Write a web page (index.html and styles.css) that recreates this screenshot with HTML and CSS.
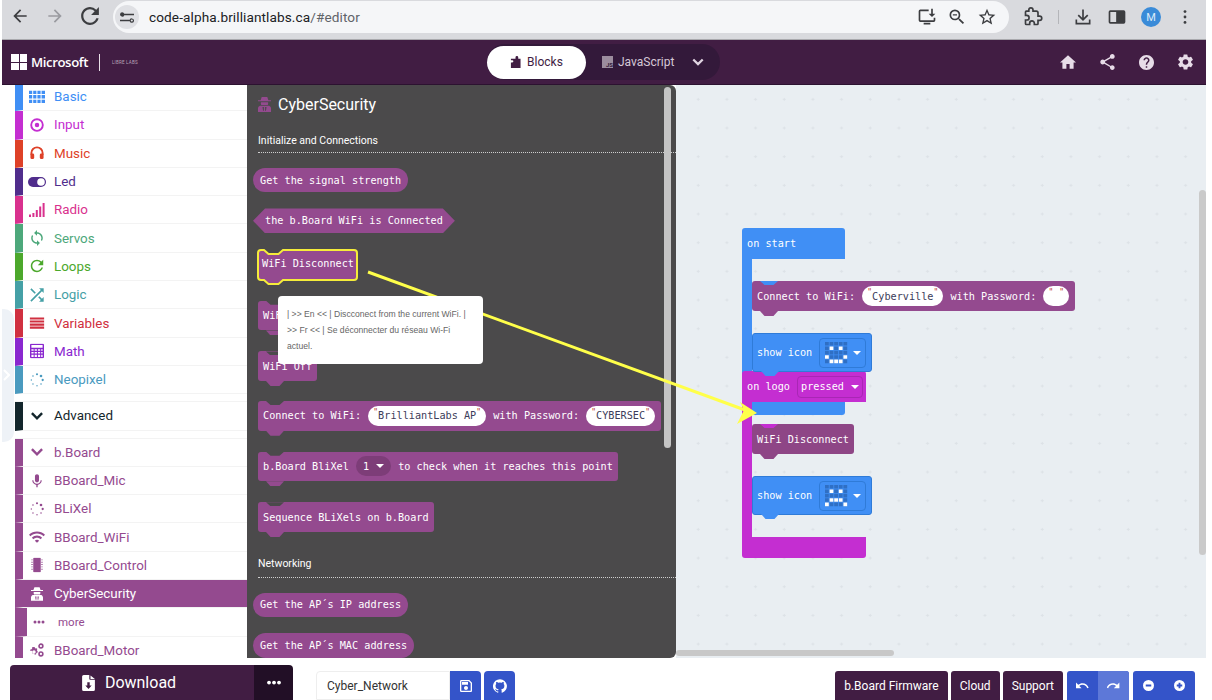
FILE: index.html
```html
<!DOCTYPE html>
<html lang="en">
<head>
    <meta charset="UTF-8">
    <title>Microsoft MakeCode - Brilliant Labs</title>
    <link rel="stylesheet" href="styles.css">
</head>
<body>
<svg class="defs" width="0" height="0">
    <symbol id="i-grid" viewBox="0 0 16 13"><path d="M0 0h3.2v3.4H0zM4.2 0h3.2v3.4H4.2zM8.4 0h3.2v3.4H8.4zM12.6 0H16v3.4h-3.4zM0 4.6h3.2V8H0zM4.2 4.6h3.2V8H4.2zM8.4 4.6h3.2V8H8.4zM12.6 4.6H16V8h-3.4zM0 9.2h3.2v3.4H0zM4.2 9.2h3.2v3.4H4.2zM8.4 9.2h3.2v3.4H8.4zM12.6 9.2H16v3.4h-3.4z"/></symbol>
    <symbol id="i-input" viewBox="0 0 16 16"><circle cx="8" cy="8" r="6.2" fill="none" stroke="currentColor" stroke-width="2"/><circle cx="8" cy="8" r="2.4"/></symbol>
    <symbol id="i-music" viewBox="0 0 16 16"><path d="M2 10V8a6 6 0 0 1 12 0v2" fill="none" stroke="currentColor" stroke-width="2"/><rect x="1" y="8.5" width="4" height="6" rx="1.5"/><rect x="11" y="8.5" width="4" height="6" rx="1.5"/></symbol>
    <symbol id="i-led" viewBox="0 0 18 10"><rect width="18" height="10" rx="5"/><circle cx="13" cy="5" r="3.8" fill="#fff"/></symbol>
    <symbol id="i-radio" viewBox="0 0 16 14"><path d="M0 11.5h2V14H0zM3.4 10h2v4h-2zM6.8 7h2v7h-2zM10.2 3.5h2V14h-2zM13.6 0h2v14h-2z"/></symbol>
    <symbol id="i-sync" viewBox="3 1 18 22"><path d="M12 4V1L8 5l4 4V6c3.31 0 6 2.69 6 6 0 1.01-.25 1.97-.7 2.8l1.46 1.46A7.93 7.93 0 0 0 20 12c0-4.42-3.58-8-8-8zm0 14c-3.31 0-6-2.69-6-6 0-1.01.25-1.97.7-2.8L5.24 7.74A7.93 7.93 0 0 0 4 12c0 4.42 3.58 8 8 8v3l4-4-4-4v3z"/></symbol>
    <symbol id="i-loop" viewBox="3 3 18 18"><path d="M17.65 6.35A7.958 7.958 0 0 0 12 4c-4.42 0-7.99 3.58-7.99 8s3.57 8 7.99 8c3.73 0 6.84-2.55 7.73-6h-2.08A5.99 5.99 0 0 1 12 18c-3.31 0-6-2.69-6-6s2.69-6 6-6c1.66 0 3.14.69 4.22 1.78L13 11h7V4z"/></symbol>
    <symbol id="i-shuffle" viewBox="3 3 18 18"><path d="M10.59 9.17L5.41 4 4 5.41l5.17 5.17 1.42-1.41zM14.5 4l2.04 2.04L4 18.59 5.41 20 17.96 7.46 20 9.5V4h-5.5zm.33 9.41l-1.41 1.41 3.13 3.13L14.5 20H20v-5.5l-2.04 2.04-3.13-3.13z"/></symbol>
    <symbol id="i-vars" viewBox="0 0 16 12"><path d="M0 0h16v2.2H0zM0 3.3h16v2.2H0zM0 6.6h16v2.2H0zM0 9.8h16V12H0z"/></symbol>
    <symbol id="i-math" viewBox="0 0 15 16"><path fill-rule="evenodd" d="M1.5 0h12A1.5 1.5 0 0 1 15 1.5v13a1.5 1.5 0 0 1-1.5 1.5h-12A1.5 1.5 0 0 1 0 14.5v-13A1.5 1.5 0 0 1 1.500 0zM1.500 1.500v3h12v-3zM1.500 6v1.800h2.400V6zM5 6v1.800h2.400V6zM8.500 6v1.800h2.400V6zM12 6v1.800h1.500V6zM1.500 9v1.800h2.400V9zM5 9v1.800h2.400V9zM8.500 9v1.800h2.400V9zM12 9v1.800h1.500V9zM1.500 12v2.500h2.400V12zM5 12v2.500h2.400V12zM8.500 12v2.500h2.400V12zM12 12v2.500h1.500V12z"/></symbol>
    <symbol id="i-ring" viewBox="0 0 16 16"><circle cx="8" cy="1.500" r="1.200"/><circle cx="12.600" cy="3.400" r="1.500"/><circle cx="14.500" cy="8" r="1.300"/><circle cx="12.600" cy="12.600" r=".9"/><circle cx="8" cy="14.500" r=".8"/><circle cx="3.400" cy="12.600" r=".8"/><circle cx="1.500" cy="8" r=".8"/><circle cx="3.400" cy="3.400" r=".9"/></symbol>
    <symbol id="i-chev" viewBox="0 0 14 9"><path d="M1.500 1.500L7 7l5.500-5.500" fill="none" stroke="currentColor" stroke-width="2.600"/></symbol>
    <symbol id="i-mic" viewBox="4 1 16 22"><path d="M12 14c1.660 0 2.990-1.340 2.990-3L15 5c0-1.660-1.340-3-3-3S9 3.340 9 5v6c0 1.660 1.340 3 3 3zm5.300-3c0 3-2.540 5.100-5.300 5.100S6.700 14 6.700 11H5c0 3.410 2.720 6.230 6 6.720V21h2v-3.280c3.280-.48 6-3.300 6-6.720h-1.700z"/></symbol>
    <symbol id="i-wifi" viewBox="1 4 22 16"><path d="M1 9l2 2c4.970-4.970 13.030-4.970 18 0l2-2C16.930 2.930 7.080 2.930 1 9zm8 8l3 3 3-3c-1.650-1.660-4.340-1.660-6 0zm-4-4l2 2c2.760-2.760 7.240-2.760 10 0l2-2C15.140 9.140 8.870 9.140 5 13z"/></symbol>
    <symbol id="i-chip" viewBox="0 0 12 16"><rect x="2" width="8" height="16" rx="1.200"/><path d="M0 2h1.400v1H0zM0 4.500h1.400v1H0zM0 7h1.400v1H0zM0 9.500h1.400v1H0zM0 12h1.400v1H0zM10.600 2H12v1h-1.400zM10.600 4.500H12v1h-1.400zM10.600 7H12v1h-1.400zM10.600 9.500H12v1h-1.400zM10.600 12H12v1h-1.400z"/></symbol>
    <symbol id="i-spy" viewBox="0 0 14 16"><path fill-rule="evenodd" d="M4 0h6l1.200 3.400H14v1.200H0V3.400h2.800zM3.200 5.600h7.600c.3 1 .2 2.200-.4 3H3.600c-.6-.8-.7-2-.4-3zM2.200 9.300h9.600c1.300.4 2.200 1.500 2.200 2.900V16H0v-3.800c0-1.400.9-2.500 2.200-2.900zM4.800 10.800l.6 3.800h.9l.1-3.800zM7.600 10.800l.1 3.800h.9l.6-3.800z"/></symbol>
    <symbol id="i-cogs" viewBox="0 0 18 16"><path fill-rule="evenodd" d="M5 4.500l1.500.3.600 1.400 1.400-.3.900 1-.6 1.400.9 1.200v1.400l-1.400.4-.3 1.500-1.300.5-1-1.100-1.500.2-.9-1.200.6-1.200-1-1.100L1 8.800l.5-1.400 1.400-.2.700-1.300-.3-1zM5.500 8.200a2 2 0 1 0 .1 4 2 2 0 0 0-.1-4z"/><circle cx="13.500" cy="3.500" r="2.200" fill="none" stroke="currentColor" stroke-width="1.800"/><circle cx="13.500" cy="12.500" r="2.200" fill="none" stroke="currentColor" stroke-width="1.800"/></symbol>
    <symbol id="i-dots" viewBox="0 0 12 4"><circle cx="2" cy="2" r="1.500"/><circle cx="6" cy="2" r="1.500"/><circle cx="10" cy="2" r="1.500"/></symbol>
    <symbol id="i-file" viewBox="4 2 16 20"><path fill-rule="evenodd" d="M6 2h7v5a1 1 0 0 0 1 1h6v12a2 2 0 0 1-2 2H6a2 2 0 0 1-2-2V4a2 2 0 0 1 2-2zM14.500 2.500L20 7h-5.500zM10.500 11v4H8l4 4.500 4-4.500h-2.500v-4z"/></symbol>
    <symbol id="i-save" viewBox="3 3 18 18"><path d="M17 3H5a2 2 0 0 0-2 2v14a2 2 0 0 0 2 2h14c1.100 0 2-.9 2-2V7l-4-4zm2 16H5V5h11.170L19 7.830V19zm-7-7c-1.660 0-3 1.340-3 3s1.340 3 3 3 3-1.340 3-3-1.340-3-3-3zM6 6h9v4H6z"/></symbol>
    <symbol id="i-github" viewBox="0 0 24 24"><path d="M12 .3a12 12 0 0 0-3.800 23.400c.6.1.8-.3.8-.6v-2c-3.300.7-4-1.600-4-1.600-.6-1.400-1.400-1.800-1.400-1.800-1.100-.7.1-.7.1-.7 1.200.1 1.800 1.200 1.800 1.200 1.100 1.800 2.800 1.300 3.500 1 .1-.8.4-1.300.8-1.600-2.700-.3-5.500-1.300-5.500-6 0-1.200.5-2.300 1.200-3.100-.1-.4-.5-1.600.1-3.200 0 0 1-.3 3.300 1.200a11.500 11.500 0 0 1 6 0c2.300-1.500 3.300-1.200 3.300-1.200.7 1.600.2 2.800.1 3.200.8.8 1.200 1.900 1.200 3.100 0 4.600-2.800 5.700-5.500 6 .4.400.8 1.100.8 2.200v3.300c0 .3.2.7.8.6A12 12 0 0 0 12 .3z"/></symbol>
    <symbol id="i-undo" viewBox="2 7 21 11"><path d="M12.500 8c-2.650 0-5.050.99-6.900 2.600L2 7v9h9l-3.620-3.620c1.390-1.160 3.160-1.880 5.120-1.880 3.540 0 6.550 2.310 7.600 5.500l2.370-.78C21.080 11.030 17.150 8 12.500 8z"/></symbol>
    <symbol id="i-redo" viewBox="2 7 21 11"><path d="M18.400 10.600C16.550 8.990 14.150 8 11.500 8c-4.650 0-8.580 3.030-9.960 7.220L3.900 16c1.050-3.190 4.050-5.500 7.600-5.500 1.950 0 3.730.72 5.120 1.880L13 16h9V7z"/></symbol>
    <symbol id="i-minus" viewBox="0 0 14 14"><path fill-rule="evenodd" d="M7 0a7 7 0 1 1 0 14A7 7 0 0 1 7 0zM3.500 5.800v2.400h7V5.800z"/></symbol>
    <symbol id="i-plus" viewBox="0 0 14 14"><path fill-rule="evenodd" d="M7 0a7 7 0 1 1 0 14A7 7 0 0 1 7 0zM5.800 3.500v2.300H3.500v2.400h2.300v2.300h2.400V8.200h2.300V5.800H8.200V3.500z"/></symbol>
    <symbol id="i-home" viewBox="2 3 20 17"><path d="M10 20v-6h4v6h5v-8h3L12 3 2 12h3v8z"/></symbol>
    <symbol id="i-share" viewBox="3 2 18 20"><path d="M18 16.080c-.76 0-1.440.3-1.960.77L8.910 12.700c.05-.23.09-.46.09-.7s-.04-.47-.09-.7l7.050-4.110c.54.5 1.250.81 2.040.81 1.660 0 3-1.340 3-3s-1.340-3-3-3-3 1.340-3 3c0 .24.04.47.09.7L8.040 9.810C7.500 9.310 6.790 9 6 9c-1.660 0-3 1.340-3 3s1.340 3 3 3c.79 0 1.500-.31 2.040-.81l7.120 4.160c-.05.21-.08.43-.08.65 0 1.610 1.310 2.920 2.920 2.920s2.920-1.310 2.920-2.920-1.310-2.920-2.920-2.920z"/></symbol>
    <symbol id="i-help" viewBox="2 2 20 20"><path d="M12 2C6.480 2 2 6.480 2 12s4.480 10 10 10 10-4.480 10-10S17.520 2 12 2zm1 17h-2v-2h2v2zm2.070-7.750l-.9.92C13.450 12.900 13 13.500 13 15h-2v-.5c0-1.100.45-2.100 1.170-2.830l1.240-1.260c.37-.36.59-.86.59-1.410 0-1.100-.9-2-2-2s-2 .9-2 2H8c0-2.210 1.790-4 4-4s4 1.790 4 4c0 .88-.36 1.680-.93 2.250z"/></symbol>
    <symbol id="i-gear" viewBox="2.500 2 19 20"><path d="M19.140 12.940c.04-.3.06-.61.06-.94 0-.32-.02-.64-.07-.94l2.030-1.580a.49.49 0 0 0 .12-.61l-1.920-3.320a.488.488 0 0 0-.59-.22l-2.390.96c-.5-.38-1.030-.7-1.620-.94l-.36-2.540a.484.484 0 0 0-.48-.41h-3.840c-.24 0-.43.17-.47.41l-.36 2.540c-.59.24-1.130.57-1.620.94l-2.390-.96c-.22-.08-.47 0-.59.22L2.740 8.870c-.12.21-.08.47.12.61l2.030 1.580c-.05.3-.09.63-.09.94s.02.64.07.94l-2.030 1.580a.49.49 0 0 0-.12.61l1.920 3.320c.12.22.37.29.59.22l2.390-.96c.5.38 1.030.7 1.620.94l.36 2.540c.05.24.24.41.48.41h3.840c.24 0 .44-.17.47-.41l.36-2.540c.59-.24 1.130-.56 1.620-.94l2.390.96c.22.08.47 0 .59-.22l1.920-3.320c.12-.22.07-.47-.12-.61l-2.010-1.580zM12 15.600c-1.980 0-3.600-1.620-3.600-3.600s1.620-3.600 3.600-3.600 3.600 1.620 3.600 3.600-1.620 3.600-3.600 3.600z"/></symbol>
    <symbol id="i-back" viewBox="0 0 24 24"><path d="M20 11H7.830l5.590-5.590L12 4l-8 8 8 8 1.410-1.410L7.830 13H20z"/></symbol>
    <symbol id="i-forward" viewBox="0 0 24 24"><path d="M12 4l-1.410 1.410L16.170 11H4v2h12.170l-5.580 5.590L12 20l8-8z"/></symbol>
    <symbol id="i-star" viewBox="0 0 24 24"><path d="M22 9.240l-7.190-.62L12 2 9.190 8.630 2 9.240l5.460 4.730L5.820 21 12 17.270 18.180 21l-1.630-7.030zM12 15.400l-3.760 2.270 1-4.280-3.320-2.880 4.380-.38L12 6.100l1.710 4.040 4.380.38-3.320 2.880 1 4.280z"/></symbol>
    <symbol id="i-zoom" viewBox="0 0 24 24"><path d="M15.500 14h-.79l-.28-.27A6.471 6.471 0 0 0 16 9.500 6.500 6.500 0 1 0 9.500 16c1.610 0 3.090-.59 4.230-1.570l.27.28v.79l5 4.990L20.490 19l-4.990-5zm-6 0C7.010 14 5 11.990 5 9.500S7.010 5 9.500 5 14 7.010 14 9.500 11.990 14 9.500 14zM7 8.800h5v1.400H7z"/></symbol>
    <symbol id="i-install" viewBox="0 0 24 24"><path d="M14 3H4a2 2 0 0 0-2 2v11a2 2 0 0 0 2 2h16a2 2 0 0 0 2-2v-3h-2v3H4V5h10zM8 19h8v2H8zM17 2h2v6h3l-4 4-4-4h3z"/></symbol>
    <symbol id="i-ext" viewBox="0 0 24 24"><path d="M20 11h-2V7a2 2 0 0 0-2-2h-4V3.500a2.500 2.500 0 0 0-5 0V5H4a1 1 0 0 0-1 1v4h1.500a2.800 2.800 0 0 1 0 5.600H3V20a1 1 0 0 0 1 1h4v-1.500a2.800 2.800 0 0 1 5.600 0V21H17a1 1 0 0 0 1-1v-4h2a2.500 2.500 0 0 0 0-5z" fill="none" stroke="currentColor" stroke-width="2"/></symbol>
    <symbol id="i-down" viewBox="0 0 24 24"><path d="M11 3h2v10l4-4 1.400 1.400L12 16.800l-6.400-6.400L7 9l4 4zM3 15h2v4h14v-4h2v6H3z"/></symbol>
    <symbol id="i-panel" viewBox="0 0 24 24"><path fill-rule="evenodd" d="M4 4h16a2 2 0 0 1 2 2v12a2 2 0 0 1-2 2H4a2 2 0 0 1-2-2V6a2 2 0 0 1 2-2zM4 6v12h7V6z"/></symbol>
    <symbol id="i-more" viewBox="0 0 4 18"><circle cx="2" cy="2" r="1.800"/><circle cx="2" cy="9" r="1.800"/><circle cx="2" cy="16" r="1.800"/></symbol>
    <symbol id="i-tune" viewBox="0 0 16 12"><path fill-rule="evenodd" d="M2.500 0a2.500 2.500 0 0 1 2.400 1.800H16v1.500H4.900A2.500 2.500 0 1 1 2.500 0zM13.500 7a2.500 2.500 0 1 1-2.400 3.200H0V8.700h11.100A2.500 2.500 0 0 1 13.500 7zM13.500 8.300a1.200 1.200 0 1 0 0 2.400 1.200 1.200 0 0 0 0-2.400z"/></symbol>
    <symbol id="i-puzzle" viewBox="0 0 12 13"><path d="M4 3h2V1.500a1.500 1.500 0 0 1 3 0V3h2.500v10H1V7h1.500a1.200 1.200 0 0 0 0-2.400H1V3z"/></symbol>
    <symbol id="m-cells" viewBox="0 0 23 22"><path fill="#2f6fc4" d="M0 0h3.800v3.600H0zM4.600 0h3.800v3.600H4.600zM9.200 0H13v3.600H9.200zM13.800 0h3.800v3.600h-3.800zM18.400 0h3.800v3.600h-3.800zM0 4.400h3.800V8H0zM4.600 4.400h3.800V8H4.600zM9.200 4.400H13V8H9.200zM13.800 4.400h3.800V8h-3.800zM18.400 4.400h3.800V8h-3.800zM0 8.800h3.800v3.600H0zM4.600 8.800h3.800v3.600H4.600zM9.200 8.800H13v3.600H9.200zM13.800 8.800h3.800v3.600h-3.800zM18.400 8.800h3.800v3.600h-3.800zM0 13.200h3.800v3.600H0zM4.600 13.200h3.800v3.600H4.600zM9.200 13.200H13v3.600H9.200zM13.800 13.200h3.800v3.600h-3.800zM18.400 13.200h3.800v3.600h-3.800zM0 17.600h3.800v3.600H0zM4.600 17.600h3.800v3.600H4.600zM9.200 17.600H13v3.600H9.200zM13.800 17.600h3.800v3.600h-3.800zM18.400 17.600h3.800v3.600h-3.800z"/></symbol>
</svg>

<div class="app">
    <div class="chrome">
        <div class="chrome-nav">
            <svg class="c-icon"><use href="#i-back"/></svg>
            <svg class="c-icon faded"><use href="#i-forward"/></svg>
            <svg class="c-icon"><use href="#i-loop"/></svg>
        </div>
        <div class="urlbar">
            <span class="site-btn"><svg width="14" height="11"><use href="#i-tune"/></svg></span>
            <span class="url">code-alpha.brilliantlabs.ca<span class="url-path">/#editor</span></span>
            <span class="url-actions">
                <svg class="c-icon"><use href="#i-install"/></svg>
                <svg class="c-icon"><use href="#i-zoom"/></svg>
                <svg class="c-icon"><use href="#i-star"/></svg>
            </span>
        </div>
        <div class="chrome-tools">
            <svg class="c-icon"><use href="#i-ext"/></svg>
            <span class="chrome-sep"></span>
            <svg class="c-icon"><use href="#i-down"/></svg>
            <svg class="c-icon"><use href="#i-panel"/></svg>
            <span class="avatar">M</span>
            <svg class="c-more"><use href="#i-more"/></svg>
        </div>
    </div>

    <header class="topbar">
        <div class="brand">
            <span class="ms-logo"><i></i><i></i><i></i><i></i></span>
            <span class="ms-name">Microsoft</span>
            <span class="brand-sep"></span>
            <span class="lab-logo">LIBRE LABS</span>
        </div>
        <div class="mode-toggle">
            <span class="mode-on"><svg width="11" height="12"><use href="#i-puzzle"/></svg>Blocks</span>
            <span class="mode-off"><span class="js-box">JS</span>JavaScript</span>
            <svg class="mode-chev" width="12" height="8"><use href="#i-chev"/></svg>
        </div>
        <div class="top-icons">
            <svg width="16" height="14"><use href="#i-home"/></svg>
            <svg width="15" height="16"><use href="#i-share"/></svg>
            <svg width="15" height="15"><use href="#i-help"/></svg>
            <svg width="15" height="16"><use href="#i-gear"/></svg>
        </div>
    </header>

    <main class="main">
        <div class="gutter">
            <div class="collapse-tab"><svg width="7" height="12" viewBox="0 0 7 12"><path d="M1 1l5 5-5 5" fill="none" stroke="#fff" stroke-width="2"/></svg></div>
        </div>

        <nav class="toolbox">
            <div class="cat basic"><svg width="16" height="13"><use href="#i-grid"/></svg><span>Basic</span></div>
            <div class="cat input"><svg width="15" height="15"><use href="#i-input"/></svg><span>Input</span></div>
            <div class="cat music"><svg width="15" height="15"><use href="#i-music"/></svg><span>Music</span></div>
            <div class="cat led"><svg width="18" height="10"><use href="#i-led"/></svg><span>Led</span></div>
            <div class="cat radio"><svg width="16" height="14"><use href="#i-radio"/></svg><span>Radio</span></div>
            <div class="cat servos"><svg width="14" height="16"><use href="#i-sync"/></svg><span>Servos</span></div>
            <div class="cat loops"><svg width="14" height="14"><use href="#i-loop"/></svg><span>Loops</span></div>
            <div class="cat logic"><svg width="15" height="15"><use href="#i-shuffle"/></svg><span>Logic</span></div>
            <div class="cat vars"><svg width="15" height="12"><use href="#i-vars"/></svg><span>Variables</span></div>
            <div class="cat math"><svg width="14" height="15"><use href="#i-math"/></svg><span>Math</span></div>
            <div class="cat neo"><svg width="14" height="14"><use href="#i-ring"/></svg><span>Neopixel</span></div>
            <div class="cat-gap"></div>
            <div class="cat advanced"><svg width="13" height="9"><use href="#i-chev"/></svg><span>Advanced</span></div>
            <div class="cat-gap"></div>
            <div class="cat bb"><svg width="13" height="9"><use href="#i-chev"/></svg><span>b.Board</span></div>
            <div class="cat bb"><svg width="11" height="15"><use href="#i-mic"/></svg><span>BBoard_Mic</span></div>
            <div class="cat bb"><svg width="14" height="14"><use href="#i-ring"/></svg><span>BLiXel</span></div>
            <div class="cat bb"><svg width="16" height="12"><use href="#i-wifi"/></svg><span>BBoard_WiFi</span></div>
            <div class="cat bb"><svg width="12" height="15"><use href="#i-chip"/></svg><span>BBoard_Control</span></div>
            <div class="cat bb selected"><svg width="12" height="14"><use href="#i-spy"/></svg><span>CyberSecurity</span></div>
            <div class="cat bb sub"><svg width="12" height="4"><use href="#i-dots"/></svg><span>more</span></div>
            <div class="cat bb"><svg width="16" height="14"><use href="#i-cogs"/></svg><span>BBoard_Motor</span></div>
        </nav>

        <section class="flyout">
            <h2 class="fly-title"><svg width="13" height="15"><use href="#i-spy"/></svg>CyberSecurity</h2>
            <div class="fly-label">Initialize and Connections</div>
            <div class="block reporter m-first">Get the signal strength</div>
            <div class="block hexa m-16">the b.Board WiFi is Connected</div>
            <div class="block-sel">
                <svg class="sel-shape" width="105" height="38" viewBox="0 0 105 38"><path d="M5 2h3l4.500 4h10L27 2h71a3 3 0 0 1 3 3v24a3 3 0 0 1-3 3H27l-4.500 4h-10L8 32H5a3 3 0 0 1-3-3V5a3 3 0 0 1 3-3z" fill="#944a8f" stroke="#f5ec3a" stroke-width="2"/></svg>
                <span>WiFi Disconnect</span>
            </div>
            <div class="block stack m-21 w-on">WiFi On</div>
            <div class="block stack m-21">WiFi Off</div>
            <div class="block stack m-20">Connect to WiFi: <span class="str"><q>"</q>BrilliantLabs AP<q>"</q></span> with Password: <span class="str"><q>"</q>CYBERSEC<q>"</q></span></div>
            <div class="block stack m-21">b.Board BliXel <span class="drop">1 <i class="caret"></i></span> to check when it reaches this point</div>
            <div class="block stack m-21">Sequence BLiXels on b.Board</div>
            <div class="fly-label net">Networking</div>
            <div class="block reporter m-first">Get the AP´s IP address</div>
            <div class="block reporter m-16">Get the AP´s MAC address</div>
            <div class="fly-scroll"></div>
            <div class="tooltip">| &gt;&gt; En &lt;&lt; | Discconect from the current WiFi. | &gt;&gt; Fr &lt;&lt; | Se déconnecter du réseau Wi-Fi actuel.</div>
        </section>

        <section class="workspace">
            <svg class="ws-grid" width="100%" height="100%">
                <defs><pattern id="plus" x="9" y="0" width="28.67" height="28.67" patternUnits="userSpaceOnUse"><path d="M28.670 14.300h-3M27.170 12.800v3" transform="translate(-14 0)" stroke="#dce1e6" stroke-width="1" fill="none"/></pattern></defs>
                <rect width="100%" height="100%" fill="url(#plus)"/>
            </svg>

            <div class="hat hat-start">
                <div class="hat-top">on start</div>
                <div class="hat-body">
                    <div class="block stack on-blue">Connect to WiFi: <span class="str"><q>"</q>Cyberville<q>"</q></span> with Password: <span class="str"><q>"</q><b class="str-gap"></b><q>"</q></span></div>
                    <div class="block stack icon-block blue-dent">show icon <span class="icon-field"><svg class="matrix" width="23" height="22" viewBox="0 0 23 22"><use href="#m-cells"/><path fill="#fff" d="M4.600 4.400h3.800V8H4.600zM13.800 4.400h3.800V8h-3.800zM0 13.200h3.800v3.600H0zM18.400 13.200h3.800v3.600h-3.800zM4.600 17.600h3.800v3.600H4.600zM9.200 17.600H13v3.600H9.200zM13.800 17.600h3.800v3.600h-3.800z"/></svg><i class="caret"></i></span></div>
                </div>
                <div class="hat-foot"></div>
            </div>

            <div class="hat hat-logo">
                <div class="hat-top">on logo <span class="pressed">pressed <i class="caret"></i></span></div>
                <div class="hat-body">
                    <div class="block stack on-magenta dull">WiFi Disconnect</div>
                    <div class="block stack icon-block purple-dent">show icon <span class="icon-field"><svg class="matrix" width="23" height="22" viewBox="0 0 23 22"><use href="#m-cells"/><path fill="#fff" d="M4.600 4.400h3.800V8H4.600zM13.800 4.400h3.800V8h-3.800zM4.600 13.200h3.800v3.600H4.600zM9.200 13.200H13v3.600H9.200zM13.800 13.200h3.800v3.600h-3.800zM0 17.600h3.800v3.600H0zM18.400 17.600h3.800v3.600h-3.800z"/></svg><i class="caret"></i></span></div>
                </div>
                <div class="hat-foot"></div>
            </div>

            <div class="ws-scroll-v"></div>
            <div class="ws-scroll-h"></div>
        </section>
    </main>

    <footer class="bottombar">
        <div class="download">
            <span class="dl-main"><svg width="13" height="16"><use href="#i-file"/></svg>Download</span>
            <span class="dl-more"><svg width="16" height="5"><use href="#i-dots"/></svg></span>
        </div>
        <div class="project">
            <span class="project-name">Cyber_Network</span>
            <span class="blue-btn"><svg width="12" height="12"><use href="#i-save"/></svg></span>
            <span class="blue-btn"><svg width="14" height="14"><use href="#i-github"/></svg></span>
        </div>
        <div class="bottom-right">
            <span class="dark-btn firmware">b.Board Firmware</span>
            <span class="dark-btn">Cloud</span>
            <span class="dark-btn">Support</span>
            <span class="btn-pair">
                <span class="pair-cell"><svg width="13" height="8"><use href="#i-undo"/></svg></span>
                <span class="pair-cell light"><svg width="13" height="8"><use href="#i-redo"/></svg></span>
            </span>
            <span class="btn-pair">
                <span class="pair-cell"><svg width="11" height="11"><use href="#i-minus"/></svg></span>
                <span class="pair-cell"><svg width="11" height="11"><use href="#i-plus"/></svg></span>
            </span>
        </div>
    </footer>

    <svg class="arrow" width="1212" height="700" viewBox="0 0 1212 700">
        <path d="M368 272L745 410" stroke="#ffff4a" stroke-width="3" fill="none"/>
        <path d="M757 413L740 402L744 410L737 424z" fill="#ffff4a"/>
    </svg>
</div>
</body>
</html>
```

FILE: styles.css
```css
* {
    box-sizing: border-box;
}
body {
    margin: 0;
    background-color: #fff;
    font-family: 'Roboto', 'Liberation Sans', sans-serif;
    overflow: hidden;
}
svg {
    fill: currentColor;
    display: block;
    flex-shrink: 0;
}
.defs {
    position: absolute;
}
.app {
    position: relative;
    width: 1204px;
    height: 700px;
    margin-left: 2px;
    display: flex;
    flex-direction: column;
}

/* browser chrome */
.chrome {
    height: 40px;
    flex-shrink: 0;
    background-color: #d9dade;
    border-bottom: 1px solid #a9a9ad;
    display: flex;
    align-items: flex-start;
    color: #3c3d40;
}
.c-icon {
    width: 20px;
    height: 20px;
}
.faded {
    color: #9a9ba0;
}
.chrome-nav {
    width: 111px;
    padding: 6px 0 0 8px;
    display: flex;
    gap: 15px;
}
.urlbar {
    width: 896px;
    height: 32px;
    margin-top: 1px;
    border-radius: 16px;
    background-color: #f5f6f8;
    display: flex;
    align-items: center;
    padding-left: 1px;
}
.site-btn {
    width: 24px;
    height: 24px;
    margin-left: 1px;
    border-radius: 50%;
    background-color: #dfe0e4;
    display: flex;
    align-items: center;
    justify-content: center;
}
.url {
    margin-left: 10px;
    font-size: 13.6px;
    color: #202124;
    letter-spacing: 0.1px;
}
.url-path {
    color: #5f6368;
}
.url-actions {
    margin-left: auto;
    padding-right: 12px;
    display: flex;
    gap: 10px;
}
.chrome-tools {
    flex: 1;
    display: flex;
    align-items: center;
    height: 32px;
    margin-top: 1px;
    padding-left: 14px;
}
.chrome-sep {
    width: 1px;
    height: 14px;
    background-color: #b4b5b9;
    margin: 0 14px 0 15px;
}
.chrome-tools .c-icon + .c-icon {
    margin-left: 14px;
}
.avatar {
    width: 20px;
    height: 20px;
    margin-left: 14px;
    border-radius: 50%;
    background-color: #3a8bd8;
    color: #dcebf8;
    font-size: 11px;
    display: flex;
    align-items: center;
    justify-content: center;
}
.c-more {
    width: 4px;
    height: 14px;
    margin-left: 22px;
}

/* makecode header */
.topbar {
    height: 45px;
    flex-shrink: 0;
    background-color: #411d43;
    border-bottom: 1px solid #2c1230;
    display: flex;
    align-items: center;
    color: #fff;
    position: relative;
}
.brand {
    width: 485px;
    display: flex;
    align-items: center;
    padding-left: 9px;
}
.ms-logo {
    width: 16px;
    height: 16px;
    display: grid;
    grid-template-columns: 1fr 1fr;
    gap: 1px;
}
.ms-logo i {
    background-color: #fff;
}
.ms-name {
    margin-left: 4px;
    font-family: 'Open Sans', 'Liberation Sans', sans-serif;
    font-size: 13.2px;
    font-weight: 600;
    letter-spacing: -0.4px;
}
.brand-sep {
    width: 1px;
    height: 17px;
    background-color: #e8dfe8;
    margin: 0 12px 0 11px;
}
.lab-logo {
    font-size: 4.5px;
    color: #b8a3ba;
    letter-spacing: 0.2px;
}
.mode-toggle {
    width: 233px;
    height: 36px;
    border-radius: 18px;
    background-color: #33193a;
    display: flex;
    align-items: center;
    font-size: 12px;
}
.mode-on {
    width: 99px;
    height: 33px;
    border-radius: 17px;
    background-color: #fff;
    color: #411d43;
    display: flex;
    align-items: center;
    justify-content: center;
    gap: 6px;
}
.mode-off {
    display: flex;
    align-items: center;
    gap: 5px;
    margin-left: 16px;
    color: #d5c8d6;
}
.js-box {
    width: 11px;
    height: 12px;
    background-color: #9c8d9e;
    color: #33193a;
    font-size: 6px;
    font-weight: 700;
    display: flex;
    align-items: flex-end;
    justify-content: flex-end;
}
.mode-chev {
    margin-left: 18px;
    color: #e0d4e1;
}
.top-icons {
    margin-left: auto;
    width: 146px;
    padding-right: 13px;
    display: flex;
    justify-content: space-between;
    align-items: center;
    color: #e7dce8;
}

/* main area */
.main {
    height: 573px;
    flex-shrink: 0;
    display: flex;
    position: relative;
    overflow: hidden;
}
.gutter {
    width: 13px;
    flex-shrink: 0;
    padding-top: 224px;
}
.collapse-tab {
    width: 12px;
    height: 133px;
    background-color: #eef2f7;
    border-radius: 0 10px 10px 0;
    padding: 60px 0 0 1px;
}
.toolbox {
    width: 233px;
    flex-shrink: 0;
    background-color: #fff;
    border-right: 1px solid #4b4a4b;
    margin-top: -2px;
    font-size: 13.4px;
}
.cat {
    height: 28.3px;
    border-left: 8px solid currentColor;
    border-bottom: 1px solid #f3f3f3;
    display: flex;
    align-items: center;
    position: relative;
}
.cat svg {
    position: absolute;
    left: 14px;
    top: 50%;
    transform: translate(-50%, -50%);
}
.cat span {
    margin-left: 31px;
}
.cat-gap {
    height: 8px;
    border-bottom: 1px solid #f3f3f3;
}
.basic { color: #408ff5; }
.input { color: #c42ed1; }
.music { color: #de4128; }
.led { color: #502d8c; }
.radio { color: #d9318e; }
.servos { color: #4da87b; }
.loops { color: #4ca82c; }
.logic { color: #45a0a6; }
.vars { color: #d03040; }
.math { color: #8a27cf; }
.neo { color: #4a9abf; }
.advanced { color: #13262c; }
.bb { color: #944a8f; }
.selected {
    background-color: #944a8f;
    color: #fff;
    border-left-color: #944a8f;
}
.sub {
    border-left-width: 12px;
    font-size: 11.500px;
}
.sub svg {
    left: 12px;
}
.sub span {
    margin-left: 31px;
}

/* flyout with the block list */
.flyout {
    width: 428px;
    flex-shrink: 0;
    position: relative;
    overflow: hidden;
    background-color: #4b4a4b;
    border-radius: 0 6px 6px 0;
    display: flex;
    flex-direction: column;
    align-items: flex-start;
    color: #fff;
}
.fly-title {
    margin: 10px 0 0 10px;
    height: 19px;
    font-size: 16px;
    font-weight: 400;
    display: flex;
    align-items: center;
    gap: 7px;
}
.fly-title svg {
    color: #944a8f;
}
.fly-label {
    align-self: stretch;
    margin: 21px 0 0 10px;
    height: 18px;
    font-size: 10.500px;
    border-bottom: 1px dotted #cfcfcf;
    line-height: 12px;
}
.fly-label.net {
    margin-top: 26px;
    height: 20px;
}
.block {
    font-family: 'DejaVu Sans Mono', monospace;
    font-size: 10.200px;
    color: #fff;
    background-color: #944a8f;
    white-space: pre;
    display: flex;
    align-items: center;
    position: relative;
}
.reporter {
    height: 25px;
    margin-left: 5px;
    padding: 0 7px;
    border-radius: 13px;
}
.hexa {
    height: 25px;
    margin-left: 5px;
    padding: 0 12px;
    clip-path: polygon(12px 0, calc(100% - 12px) 0, 100% 50%, calc(100% - 12px) 100%, 12px 100%, 0 50%);
}
.stack {
    --dent: #4b4a4b;
    height: 30px;
    margin-left: 10px;
    padding: 0 5px;
    border-radius: 3px;
}
.stack::before {
    content: "";
    position: absolute;
    left: 8px;
    top: 0;
    width: 18px;
    height: 4px;
    background-color: var(--dent);
    clip-path: polygon(0 0, 100% 0, 75% 100%, 25% 100%);
}
.stack::after {
    content: "";
    position: absolute;
    left: 8px;
    top: 100%;
    width: 18px;
    height: 5px;
    background-color: inherit;
    clip-path: polygon(0 0, 100% 0, 75% 100%, 25% 100%);
    z-index: 1;
}
.m-first { margin-top: 15px; }
.m-16 { margin-top: 16px; }
.m-20 { margin-top: 20px; }
.m-21 { margin-top: 21px; }
.w-on { width: 80px; }
.block-sel {
    position: relative;
    margin: 15px 0 0 8px;
    width: 105px;
    height: 32px;
    font-family: 'DejaVu Sans Mono', monospace;
    font-size: 10.200px;
    display: flex;
    align-items: center;
    padding-left: 6px;
    white-space: pre;
}
.sel-shape {
    position: absolute;
    left: 0;
    top: 0;
}
.block-sel span {
    position: relative;
}
.str {
    height: 20px;
    padding: 0 5px;
    margin: 0 1px;
    border-radius: 10px;
    background-color: #fff;
    color: #3c3c5a;
    display: inline-flex;
    align-items: center;
}
.str q {
    quotes: none;
    color: #c0392b;
    font-size: 8px;
    align-self: flex-start;
    margin-top: 2px;
}
.str-gap {
    width: 6px;
}
.drop {
    height: 20px;
    width: 35px;
    margin: 0 1px;
    border-radius: 10px;
    background-color: #7d3d78;
    display: inline-flex;
    align-items: center;
    justify-content: center;
    gap: 1px;
}
.caret {
    display: inline-block;
    width: 0;
    height: 0;
    border-left: 4px solid transparent;
    border-right: 4px solid transparent;
    border-top: 4px solid #fff;
}
.fly-scroll {
    position: absolute;
    left: 416px;
    top: 2px;
    width: 7px;
    height: 361px;
    border-radius: 4px;
    background-color: #c4c4c4;
}
.tooltip {
    position: absolute;
    left: 30px;
    top: 211px;
    width: 205px;
    height: 68px;
    padding: 10px 9px;
    background-color: #fff;
    border-radius: 4px;
    color: #666;
    font-family: 'Liberation Sans', sans-serif;
    font-size: 8.600px;
    line-height: 16px;
    z-index: 5;
}

/* workspace */
.workspace {
    flex: 1;
    position: relative;
    overflow: hidden;
    background-color: #e9eef2;
}
.ws-grid {
    position: absolute;
    left: 0;
    top: 0;
}
.hat {
    position: absolute;
    left: 66px;
    display: flex;
    flex-direction: column;
    align-items: stretch;
    font-family: 'DejaVu Sans Mono', monospace;
    font-size: 10.200px;
    color: #fff;
    white-space: pre;
}
.hat-start {
    top: 143px;
    width: 103px;
    --hat: #408ff5;
}
.hat-logo {
    top: 286px;
    width: 124px;
    --hat: #c42ed1;
}
.hat-top {
    height: 31px;
    padding-left: 5px;
    background-color: var(--hat);
    border-radius: 3px 3px 0 0;
    display: flex;
    align-items: center;
}
.hat-body {
    border-left: 10px solid var(--hat);
}
.hat-body .block {
    width: max-content;
    margin-left: 0;
}
.hat-foot {
    height: 21px;
    background-color: var(--hat);
    border-radius: 0 0 3px 3px;
}
.on-blue {
    --dent: #408ff5;
    z-index: 2;
}
.on-magenta {
    --dent: #c42ed1;
    z-index: 2;
}
.dull {
    background-color: #8e4686;
}
.icon-block {
    height: 39px;
    background-color: #408ff5;
    border: 1px solid #2f7bd8;
    padding-left: 4px;
    z-index: 1;
}
.blue-dent {
    --dent: transparent;
}
.purple-dent {
    --dent: transparent;
}
.icon-field {
    width: 47px;
    height: 30px;
    margin-left: 1px;
    border: 1px solid #2f7bd8;
    border-radius: 4px;
    display: flex;
    align-items: center;
    padding-left: 5px;
    gap: 5px;
}
.pressed {
    width: 66px;
    height: 22px;
    margin-left: 1px;
    border: 1px solid #a926b5;
    border-radius: 4px;
    display: inline-flex;
    align-items: center;
    justify-content: center;
    gap: 1px;
}
.ws-scroll-v {
    position: absolute;
    right: 0;
    top: 105px;
    width: 7px;
    height: 365px;
    border-radius: 4px;
    background-color: #cacaca;
}
.ws-scroll-h {
    position: absolute;
    left: 0;
    bottom: 2px;
    width: 218px;
    height: 6px;
    border-radius: 3px;
    background-color: #c8c8c8;
}

/* bottom bar */
.bottombar {
    flex: 1;
    display: flex;
    align-items: flex-end;
    background-color: #fff;
    padding-left: 8px;
    color: #fff;
    font-size: 12px;
}
.download {
    width: 283px;
    height: 35px;
    display: flex;
    border-radius: 4px 4px 0 0;
    overflow: hidden;
}
.dl-main {
    flex: 1;
    background-color: #411d43;
    display: flex;
    align-items: center;
    justify-content: center;
    gap: 10px;
    font-size: 16px;
    padding-right: 6px;
}
.dl-more {
    width: 39px;
    background-color: #220f26;
    display: flex;
    align-items: center;
    justify-content: center;
}
.project {
    display: flex;
    margin-left: 23px;
    height: 29px;
}
.project-name {
    width: 134px;
    border: 1px solid #eee;
    border-radius: 4px 0 0 0;
    padding-left: 10px;
    color: #333;
    display: flex;
    align-items: center;
}
.blue-btn {
    width: 31px;
    background-color: #3454c9;
    border-radius: 0 4px 0 0;
    display: flex;
    align-items: center;
    justify-content: center;
}
.blue-btn + .blue-btn {
    margin-left: 3px;
    border-radius: 4px 4px 0 0;
}
.bottom-right {
    margin-left: auto;
    margin-right: 11px;
    height: 29px;
    display: flex;
    gap: 3px;
}
.dark-btn {
    padding: 0 9px;
    background-color: #411d43;
    border-radius: 3px 3px 0 0;
    display: flex;
    align-items: center;
}
.btn-pair {
    display: flex;
    width: 62px;
    margin-left: 1px;
    border-radius: 3px 3px 0 0;
    overflow: hidden;
    background-color: #3454c9;
}
.pair-cell {
    flex: 1;
    display: flex;
    align-items: center;
    justify-content: center;
}
.pair-cell.light {
    background-color: #5d78d8;
}

/* yellow annotation drawn on the screenshot */
.arrow {
    position: absolute;
    left: -2px;
    top: 0;
    pointer-events: none;
    z-index: 3;
}
.flyout {
    z-index: auto;
}
```
